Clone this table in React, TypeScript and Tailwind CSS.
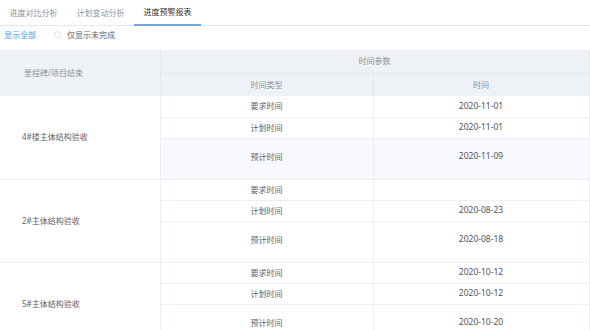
import React from "react";

const font = { fontFamily: '"Noto Sans", "Noto Sans CJK SC", sans-serif' };

type Row = { type: string; date: string; tall?: boolean; tint?: boolean };
type Group = { name: string; rows: Row[] };

const groups: Group[] = [
  {
    name: "4#楼主体结构验收",
    rows: [
      { type: "要求时间", date: "2020-11-01" },
      { type: "计划时间", date: "2020-11-01" },
      { type: "预计时间", date: "2020-11-09", tall: true, tint: true },
    ],
  },
  {
    name: "2#主体结构验收",
    rows: [
      { type: "要求时间", date: "" },
      { type: "计划时间", date: "2020-08-23" },
      { type: "预计时间", date: "2020-08-18", tall: true },
    ],
  },
  {
    name: "5#主体结构验收",
    rows: [
      { type: "要求时间", date: "2020-10-12" },
      { type: "计划时间", date: "2020-10-12" },
      { type: "预计时间", date: "2020-10-20", tall: true },
    ],
  },
];

export default function App() {
  const tabs = ["进度对比分析", "计划变动分析", "进度预警报表"];
  return (
    <div className="w-[590px] h-[330px] overflow-hidden bg-white" style={font}>
      <div className="flex h-[26px] border-b border-[#e4e7ed]">
        {tabs.map((t, i) => (
          <div
            key={t}
            className={
              i === 2
                ? "w-[67px] flex items-center justify-center text-[8px] text-[#303133] border-b-2 border-[#6fa8dc] -mb-px"
                : "w-[67px] flex items-center justify-center text-[8px] text-[#909399]"
            }
          >
            {t}
          </div>
        ))}
      </div>
      <div className="flex items-center h-[15px] mt-[1px] mb-[8px] pl-[4px] text-[8px]">
        <span className="text-[#409eff]">显示全部</span>
        <span className="ml-[18px] w-[7px] h-[7px] rounded-full border border-[#dcdfe6]"></span>
        <span className="ml-[6px] text-[#606266]">仅显示未完成</span>
      </div>
      <table className="border-collapse table-fixed w-[589px] text-[8px] text-[#606266]">
        <colgroup>
          <col className="w-[160px]" />
          <col className="w-[213px]" />
          <col className="w-[216px]" />
        </colgroup>
        <thead className="bg-[#eef1f6] text-[#909399]">
          <tr className="h-[23px]">
            <td rowSpan={2} className="pl-[24px] border-r border-[#e4e7ed] font-normal">
              里程碑/项目结束
            </td>
            <td colSpan={2} className="text-center border-b border-r border-[#e4e7ed]">
              时间参数
            </td>
          </tr>
          <tr className="h-[23px]">
            <td className="text-center border-r border-[#e4e7ed]">时间类型</td>
            <td className="text-center border-r border-[#e4e7ed]">时间</td>
          </tr>
        </thead>
        <tbody>
          {groups.map((g) =>
            g.rows.map((r, i) => (
              <tr key={g.name + i} className={r.tall ? "h-[41px]" : "h-[21px]"}>
                {i === 0 && (
                  <td
                    rowSpan={3}
                    className="pl-[22px] border-b border-r border-[#ebeef5] bg-white"
                  >
                    {g.name}
                  </td>
                )}
                <td
                  className={
                    (r.tint ? "bg-[#f7f9fc] " : "") +
                    (r.tall ? "pb-[4px] " : "") +
                    "text-center border-b border-r border-[#ebeef5]"
                  }
                >
                  {r.type}
                </td>
                <td
                  className={
                    (r.tint ? "bg-[#f7f9fc] " : "") +
                    (r.tall ? "pb-[4px] " : "") +
                    "text-center border-b border-r border-[#ebeef5] text-[8.5px] text-[#505256]"
                  }
                >
                  {r.date}
                </td>
              </tr>
            ))
          )}
        </tbody>
      </table>
    </div>
  );
}
